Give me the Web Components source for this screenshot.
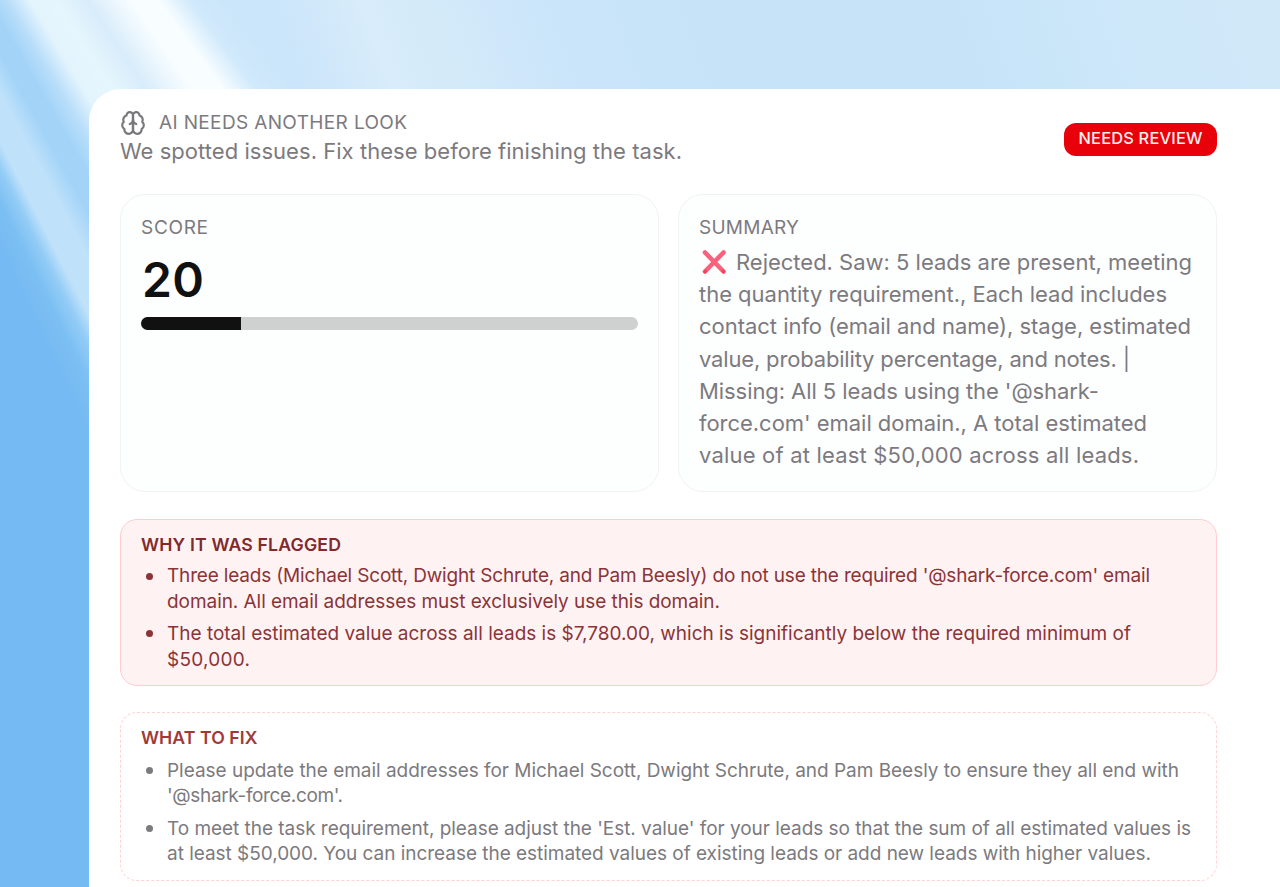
<!DOCTYPE html>
<html lang="en">
<head>
<meta charset="utf-8">
<title>Task review</title>
<style>
html,body{margin:0;height:100%;overflow:hidden}
body{font-family:Inter,"Liberation Sans",sans-serif;color:#7c7a7e}
</style>
</head>
<body>
<review-page>
  <review-header slot="header"></review-header>
  <score-card></score-card>
  <summary-card></summary-card>
  <note-panel slot="notes" kind="flag">
    <fit-line slot="title" w="200">WHY IT WAS FLAGGED</fit-line>
    <note-item><fit-line w="983">Three leads (Michael Scott, Dwight Schrute, and Pam Beesly) do not use the required '@shark-force.com' email</fit-line><fit-line w="553">domain. All email addresses must exclusively use this domain.</fit-line></note-item>
    <note-item><fit-line w="964">The total estimated value across all leads is $7,780.00, which is significantly below the required minimum of</fit-line><fit-line w="83">$50,000.</fit-line></note-item>
  </note-panel>
  <note-panel slot="notes" kind="fix">
    <fit-line slot="title" w="116.5">WHAT TO FIX</fit-line>
    <note-item><fit-line w="1012">Please update the email addresses for Michael Scott, Dwight Schrute, and Pam Beesly to ensure they all end with</fit-line><fit-line w="176">'@shark-force.com'.</fit-line></note-item>
    <note-item><fit-line w="1024">To meet the task requirement, please adjust the 'Est. value' for your leads so that the sum of all estimated values is</fit-line><fit-line w="984">at least $50,000. You can increase the estimated values of existing leads or add new leads with higher values.</fit-line></note-item>
  </note-panel>
</review-page>
<script>
const define=(name,html,setup)=>customElements.define(name,class extends HTMLElement{
  connectedCallback(){
    if(this.shadowRoot)return;
    this.attachShadow({mode:'open'}).innerHTML=html;
    if(setup)setup(this);
  }
});

define('review-page',`<style>
:host{display:block;box-sizing:border-box;height:887px;padding:89px 0 0 89px;overflow:hidden;
background:conic-gradient(from 0deg at -615px -1060px,#cbe5fa00 0deg,#cbe5fa00 141.7deg,#d0e9fbff 142.8deg,#f8fdff 143.9deg,#f8fdff 144.9deg,#d8ecfa 146.5deg,#e6f6fd 147.7deg,#e4f4fd 148.7deg,#b9defa 149.6deg,#a3d4f8 150.3deg,#a3d4f8 151.1deg,#bfe1fa 151.9deg,#bfe1fa 152.9deg,#92ccf6 153.4deg,#7cbff3 154deg,#75baf2 154.8deg,#75baf2 180deg),
linear-gradient(70.7deg,#cbe5fa 36.7%,#d8ecfa 42.2%,#d2e9f9 48%,#cbe5fa 53%,#c6e3f8 64%,#c6e3f8 79%,#cce7f9 87.7%,#d1e8f8 99%)}
main{box-sizing:border-box;height:900px;background:#fff;border-radius:32px 0 0 0;padding:20px 63px 0 31px}
.cards{display:grid;grid-template-columns:1fr 1fr;gap:19px;height:298px;margin-top:26px}
</style><main><slot name="header"></slot><div class="cards"><slot></slot></div><slot name="notes"></slot></main>`);

/* One line of copy, tracked to the measure given in "w". */
define('fit-line','<style>:host{display:block;white-space:nowrap}span{display:inline-block}</style><span><slot></slot></span>',el=>{
  const s=el.shadowRoot.querySelector('span');
  requestAnimationFrame(()=>{
    s.style.letterSpacing='0px';
    const n=el.textContent.trim().length;
    s.style.letterSpacing=((+el.getAttribute('w')-s.getBoundingClientRect().width)/(n-1)).toFixed(4)+'px';
  });
});

define('review-header',`<style>
:host{display:flex;justify-content:space-between;align-items:flex-start;height:59px}
.top{display:flex;align-items:center;gap:13px;height:27px;font-size:19px}
svg{width:26px;height:26px;display:block}
.sub{font-size:22px;line-height:30px}
.badge{margin-top:14px;width:153px;height:33px;box-sizing:border-box;padding-left:14.5px;border-radius:12px;background:#e8000b;color:#fff0ee;font-size:16.4px;font-weight:500;line-height:31px}
</style>
<div><div class="top"><svg viewBox="0 0 24 24" fill="none" stroke="#79777b" stroke-width="2" stroke-linecap="round" stroke-linejoin="round"><path d="M12 5a3 3 0 1 0-5.997.125 4 4 0 0 0-2.526 5.77 4 4 0 0 0 .556 6.588A4 4 0 1 0 12 18Z"/><path d="M12 5a3 3 0 1 1 5.997.125 4 4 0 0 1 2.526 5.77 4 4 0 0 1-.556 6.588A4 4 0 1 1 12 18Z"/><path d="M15 13a4.5 4.5 0 0 1-3-4 4.5 4.5 0 0 1-3 4M12 5v13"/></svg><fit-line w="248">AI NEEDS ANOTHER LOOK</fit-line></div>
<fit-line class="sub" w="562">We spotted issues. Fix these before finishing the task.</fit-line></div>
<div class="badge"><fit-line w="124">NEEDS REVIEW</fit-line></div>`);

const card=`:host{display:block;box-sizing:border-box;border:1.6px solid #f1f2f2;border-radius:25px;background:#fdfefe;padding:20px 20px 0}
.label{font-size:19px;line-height:26px}`;

define('score-card',`<style>${card}
.num{font-size:48px;font-weight:600;line-height:52px;color:#111;margin-top:13px;padding-left:1px}
.bar{height:13px;border-radius:7px;background:#cfd1d0;overflow:hidden;margin-top:11px}
.bar i{display:block;width:20.2%;height:100%;background:#111}
</style><fit-line class="label" w="67">SCORE</fit-line><fit-line class="num" w="62">20</fit-line><div class="bar"><i></i></div>`);

define('summary-card',`<style>${card}
.copy{font-size:22px;line-height:32.2px;margin-top:5px}
.first{display:flex;align-items:center;gap:9px;padding-left:3px}
svg{width:25px;height:25px}
</style><fit-line class="label" w="100">SUMMARY</fit-line>
<div class="copy"><div class="first"><svg viewBox="0 0 25 25" aria-label="Rejected"><path d="M3 2.5 21.5 21.5M21.5 2.5 3 21.5" stroke="#f9627d" stroke-width="4.6" stroke-linecap="round"/><path d="M3 21.6l.6-.6M21.6 21.6l-.6-.6" stroke="#f3405a" stroke-width="3" stroke-linecap="round"/></svg><fit-line w="456">Rejected. Saw: 5 leads are present, meeting</fit-line></div>
<fit-line w="468">the quantity requirement., Each lead includes</fit-line>
<fit-line w="492">contact info (email and name), stage, estimated</fit-line>
<fit-line w="431">value, probability percentage, and notes. |</fit-line>
<fit-line w="400">Missing: All 5 leads using the '@shark-</fit-line>
<fit-line w="448">force.com' email domain., A total estimated</fit-line>
<fit-line w="440">value of at least $50,000 across all leads.</fit-line></div>`);

define('note-panel',`<style>
:host{display:block;box-sizing:border-box;height:167px;margin-top:27px;border-radius:17px;padding:12px 20px;border:1.6px solid #ffcdd0;background:#fef2f2;color:#8b3438}
:host([kind=fix]){height:169px;margin-top:26px;border:1.6px dashed #ffd2d4;background:#fff;color:#7c7a7e}
.title{font-size:17.7px;font-weight:600;line-height:26px;color:#812a2d}
:host([kind=fix]) .title{color:#a03a38}
.list{display:flex;flex-direction:column;gap:6.4px;margin-top:5px;font-size:19px;line-height:25.8px}
:host([kind=fix]) .list{margin-top:6.7px}
</style><div class="title"><slot name="title"></slot></div><div class="list"><slot></slot></div>`);

define('note-item',`<style>
:host{display:flex}
i{flex:none;width:7px;height:7px;border-radius:50%;background:currentColor;margin:9.5px 14px 0 5px}
</style><i></i><div><slot></slot></div>`);
</script>
</body>
</html>
